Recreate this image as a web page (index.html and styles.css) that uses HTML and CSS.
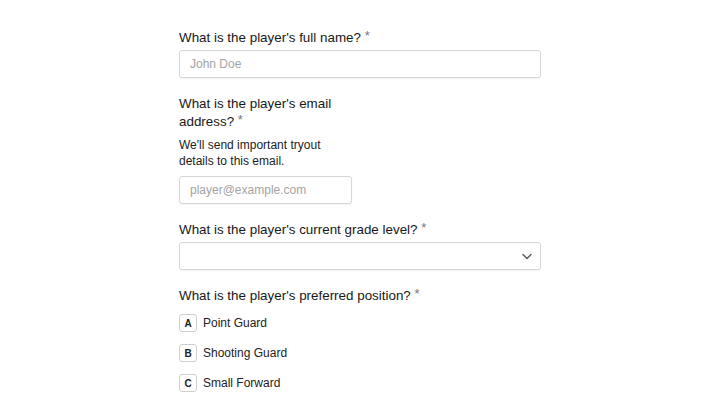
FILE: index.html
```html
<!DOCTYPE html>
<html lang="en">
<head>
  <meta charset="UTF-8" />
  <meta name="viewport" content="width=device-width, initial-scale=1" />
  <title>Tryout Registration</title>
  <link rel="stylesheet" href="styles.css">
</head>
<body>
  <form class="form">
    <div class="field">
      <label class="question" for="name">What is the player's full name? <span class="req">*</span></label>
      <input id="name" class="text-input" type="text" placeholder="John Doe">
    </div>

    <div class="field narrow">
      <label class="question" for="email">What is the player's email address? <span class="req">*</span></label>
      <p class="help">We'll send important tryout details to this email.</p>
      <input id="email" class="text-input" type="email" placeholder="player@example.com">
    </div>

    <div class="field">
      <label class="question" for="grade">What is the player's current grade level? <span class="req">*</span></label>
      <div class="select-wrap">
        <select id="grade" class="select">
          <option value=""></option>
          <option>9th Grade</option>
          <option>10th Grade</option>
          <option>11th Grade</option>
          <option>12th Grade</option>
        </select>
        <svg class="chevron" width="12" height="12" viewBox="0 0 12 12" fill="none" stroke="#555" stroke-width="1.3" stroke-linecap="round" stroke-linejoin="round"><path d="M2 4.5 6 8.5l4-4"/></svg>
      </div>
    </div>

    <div class="field">
      <span class="question">What is the player's preferred position? <span class="req">*</span></span>
      <ul class="choices">
        <li class="choice"><span class="key">A</span>Point Guard</li>
        <li class="choice"><span class="key">B</span>Shooting Guard</li>
        <li class="choice"><span class="key">C</span>Small Forward</li>
      </ul>
    </div>
  </form>
</body>
</html>
```

FILE: styles.css
```css
body {
  margin: 0;
  background: #fff;
  font-family: "Liberation Sans", Arial, sans-serif;
  color: #222;
  overflow: hidden;
}
.form {
  width: 362px;
  margin: 0 0 0 179px;
  padding-top: 28px;
}
.field {
  display: flex;
  flex-direction: column;
  margin-bottom: 16px;
}
.field.narrow {
  width: 173px;
}
.question {
  display: block;
  padding-top: 1px;
  font-size: 13.4px;
  line-height: 18px;
  font-weight: normal;
  color: #181818;
  margin-bottom: 3px;
}
.req {
  font-size: 13px;
  line-height: 1;
  color: #777;
  position: relative;
  top: -2px;
}
.help {
  margin: 3px 0 7px;
  font-size: 12px;
  line-height: 16px;
  color: #222;
}
.text-input, .select {
  display: block;
  box-sizing: border-box;
  width: 100%;
  height: 28px;
  padding: 0 10px;
  border: 1px solid #d6d6d6;
  border-radius: 3px;
  box-shadow: 0 1px 2px rgba(0,0,0,0.05);
  font-family: inherit;
  font-size: 12px;
  color: #222;
  background: #fff;
  outline: none;
}
.text-input::placeholder {
  color: #a3a3a3;
}
.select-wrap {
  position: relative;
}
.select {
  appearance: none;
  -webkit-appearance: none;
}
.chevron {
  position: absolute;
  right: 8px;
  top: 8px;
  pointer-events: none;
}
.choices {
  list-style: none;
  margin: 6px 0 0;
  padding: 0;
}
.choice {
  display: flex;
  align-items: center;
  gap: 6px;
  height: 18px;
  margin-bottom: 12px;
  font-size: 12px;
  color: #222;
}
.key {
  display: flex;
  align-items: center;
  justify-content: center;
  box-sizing: border-box;
  width: 18px;
  height: 18px;
  border: 1px solid #cfcfcf;
  border-radius: 3px;
  font-size: 10px;
  font-weight: bold;
  color: #222;
}
```
